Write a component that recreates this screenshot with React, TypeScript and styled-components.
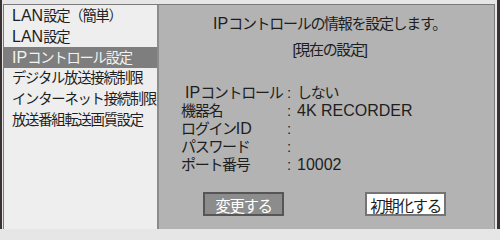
import React from 'react';
import styled, { createGlobalStyle } from 'styled-components';

const GlobalStyle = createGlobalStyle`
    html, body {
        margin: 0;
        padding: 0;
        background: #e6e6e6;
        overflow: hidden;
    }

    body {
        font-family: "Liberation Sans", "Noto Sans CJK JP", sans-serif;
        font-size: 15px;
        letter-spacing: -1.3px;
        color: #1e1e1e;
    }
`;

const Screen = styled.div`
    width: 500px;
    height: 229px;
    box-sizing: border-box;
    border-left: 2px solid #3a3131;
    border-right: 3px solid #3a3131;
    padding: 4px 2px 0 1px;
    overflow: hidden;
    background: #e6e6e6;
`;

const Frame = styled.div`
    display: flex;
    height: 240px;
    border: 1px solid #7a7a7a;
    border-bottom: none;
`;

const Menu = styled.ul`
    width: 153px;
    flex: none;
    margin: 0;
    padding: 0;
    list-style: none;
    background: #eeeeee;
    border-right: 2px solid #8c8c8c;
    overflow: hidden;
`;

const MenuItem = styled.li<{ $active?: boolean }>`
    height: 21px;
    line-height: 21px;
    padding-left: 8px;
    font-size: 14.3px;
    letter-spacing: -1.2px;
    white-space: nowrap;
    background: ${(p) => (p.$active ? '#7e7e7e' : 'transparent')};
    color: ${(p) => (p.$active ? '#f2f2f2' : '#1e1e1e')};
`;

const Latin = styled.span`
    font-family: "Liberation Sans", sans-serif;
    font-size: 16px;
    letter-spacing: 0;
`;

const Detail = styled.section`
    flex: 1;
    display: flex;
    flex-direction: column;
    padding-top: 9px;
    background: #b3b3b3;
`;

const Heading = styled.p<{ $gap?: number }>`
    margin: ${(p) => p.$gap ?? 0}px 0 0;
    padding-left: 6px;
    line-height: 20px;
    text-align: center;
`;

const InfoList = styled.dl`
    display: grid;
    grid-template-columns: 106px 10px auto;
    margin: 24px 0 0;
    padding-left: 22px;
    line-height: 18px;
`;

const Label = styled.dt<{ $indent?: boolean }>`
    padding-left: ${(p) => (p.$indent ? '4px' : '0')};
    white-space: nowrap;
`;

const Colon = styled.span``;

const Value = styled.dd`
    margin: 0;
    white-space: nowrap;
`;

const Actions = styled.div`
    display: flex;
    gap: 81px;
    margin-top: 18px;
    padding-left: 44px;
`;

const ActionButton = styled.button<{ $primary?: boolean }>`
    width: 81px;
    height: 24px;
    padding: 0;
    box-sizing: border-box;
    font-family: inherit;
    font-size: 15.5px;
    letter-spacing: -1.4px;
    border: 2px solid ${(p) => (p.$primary ? '#565656' : '#747474')};
    background: ${(p) => (p.$primary ? '#8c8c8c' : '#ffffff')};
    color: ${(p) => (p.$primary ? '#ffffff' : '#1e1e1e')};
    cursor: pointer;
`;

// wrap runs of latin letters / digits so they keep their natural width
function Rich({ text }: { text: string }) {
    const parts = text.split(/([A-Za-z0-9][A-Za-z0-9 ]*)/);
    return (
        <>
            {parts.map((part, i) =>
                /^[A-Za-z0-9]/.test(part) ? <Latin key={i}>{part}</Latin> : part
            )}
        </>
    );
}

const menu = [
    'LAN設定（簡単）',
    'LAN設定',
    'IPコントロール設定',
    'デジタル放送接続制限',
    'インターネット接続制限',
    '放送番組転送画質設定',
];

const info = [
    { label: 'IPコントロール', value: 'しない', indent: true },
    { label: '機器名', value: '4K RECORDER' },
    { label: 'ログインID', value: '' },
    { label: 'パスワード', value: '' },
    { label: 'ポート番号', value: '10002' },
];

export default function App() {
    return (
        <>
            <GlobalStyle />
            <Screen>
                <Frame>
                    <Menu>
                        {menu.map((item, i) => (
                            <MenuItem key={item} $active={i === 2}>
                                <Rich text={item} />
                            </MenuItem>
                        ))}
                    </Menu>

                    <Detail>
                        <Heading>
                            <Rich text="IPコントロールの情報を設定します。" />
                        </Heading>
                        <Heading $gap={6}>[現在の設定]</Heading>

                        <InfoList>
                            {info.map((row) => (
                                <React.Fragment key={row.label}>
                                    <Label $indent={row.indent}>
                                        <Rich text={row.label} />
                                    </Label>
                                    <Colon>:</Colon>
                                    <Value>
                                        <Rich text={row.value} />
                                    </Value>
                                </React.Fragment>
                            ))}
                        </InfoList>

                        <Actions>
                            <ActionButton type="button" $primary>
                                変更する
                            </ActionButton>
                            <ActionButton type="button">初期化する</ActionButton>
                        </Actions>
                    </Detail>
                </Frame>
            </Screen>
        </>
    );
}
